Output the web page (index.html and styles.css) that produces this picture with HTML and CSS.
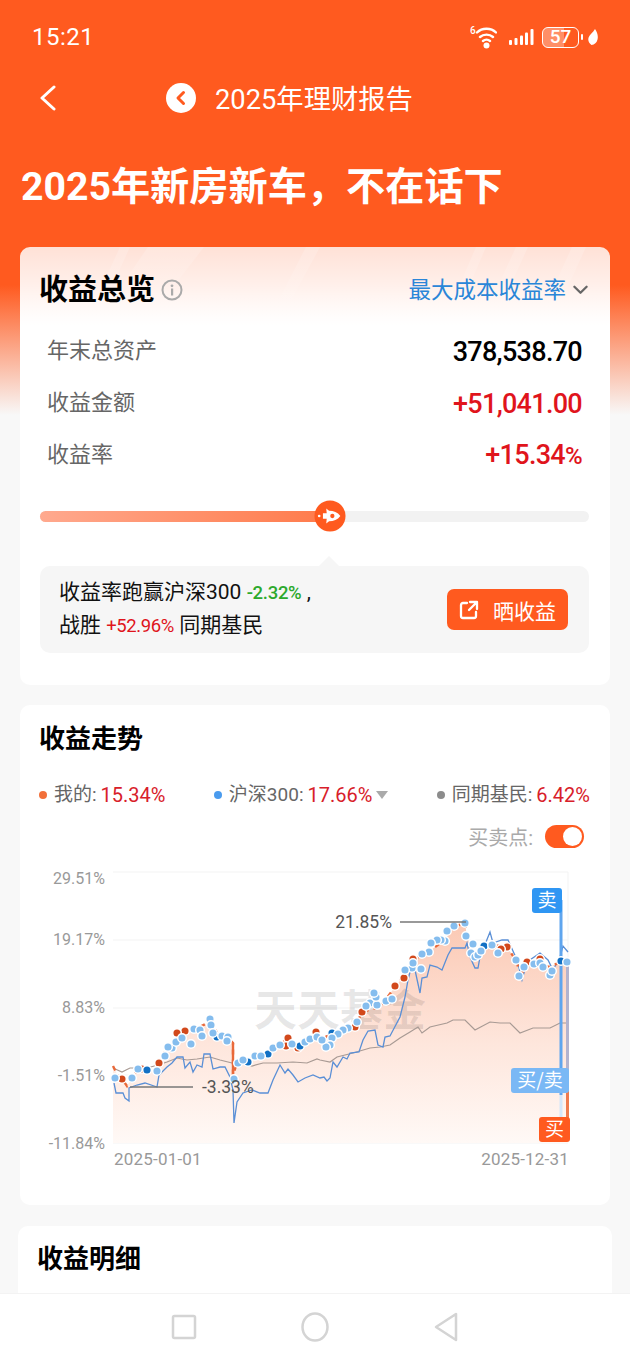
FILE: index.html
```html
<!DOCTYPE html>
<html lang="zh-CN">
<head>
<meta charset="utf-8">
<title>2025年理财报告</title>
<link rel="stylesheet" href="styles.css">
</head>
<body>
<div class="screen">
  <header class="status">
    <span class="time">15:21</span>
    <div class="status-icons">
      <svg class="wifi" viewBox="0 0 27 24" width="27" height="24"><text x="0" y="9" class="wifi-six">6</text><path d="M7 7.500C12 2.500 21 2.500 26 7.500M10 12c3.500-3.200 9.500-3.200 13 0M13 16c2-1.700 5-1.700 7 0" fill="none" stroke="#fff" stroke-width="2.400" stroke-linecap="round"/><circle cx="16.500" cy="20.500" r="3" fill="#fff"/></svg>
      <svg class="signal" viewBox="0 0 25 16" width="25" height="16"><g fill="#fff"><rect x="0" y="11" width="3" height="5" rx="1"/><rect x="5.500" y="9" width="3" height="7" rx="1"/><rect x="11" y="6.500" width="3" height="9.500" rx="1"/><rect x="16" y="3.500" width="3" height="12.500" rx="1"/><rect x="21.500" y="0" width="3" height="16" rx="1"/></g></svg>
      <span class="battery">57</span>
      <span class="battery-nub"></span>
      <svg class="leaf" viewBox="0 0 10 17" width="10" height="17"><path d="M7 0C9.500 3.500 10.300 7 9.500 10.500 8.800 13.800 6.500 15.500 3.500 16 .8 14 -.3 11.500 .6 8.500 1.500 5.500 5 3.500 7 0Z" fill="#fff"/></svg>
    </div>
  </header>
  <nav class="topnav">
    <svg class="back" viewBox="0 0 18 26" width="18" height="26"><path d="M15 2 3 13l12 11" fill="none" stroke="#fff" stroke-width="3" stroke-linecap="round" stroke-linejoin="round"/></svg>
    <svg class="back-round" viewBox="0 0 30 30" width="30" height="30"><circle cx="15" cy="15" r="15" fill="#fff"/><path d="M17.500 9.500 12 15l5.500 5.500" fill="none" stroke="#ff5a1f" stroke-width="3" stroke-linecap="round" stroke-linejoin="round"/></svg>
    <span class="nav-title">2025年理财报告</span>
  </nav>
  <h1 class="hero">2025年新房新车，不在话下</h1>

  <main class="content">
    <section class="card overview">
      <svg class="stripes" viewBox="0 0 590 70" width="590" height="70" aria-hidden="true">
        <defs><linearGradient id="st" x1="0" y1="0" x2="0" y2="1"><stop offset="0" stop-color="#fff" stop-opacity=".18"/><stop offset="1" stop-color="#fff" stop-opacity="0"/></linearGradient></defs>
        <path d="M100 0h10L78 70H68ZM128 0h56L130 70H80ZM286 0h14L262 70H250ZM456 0h10L436 70H426ZM496 0h12L476 70H464ZM552 0h14L534 70H520Z" fill="url(#st)"/>
      </svg>
      <div class="overview-head">
        <div class="head-left">
          <h2 class="h-big">收益总览</h2>
          <svg class="info" viewBox="0 0 22 22" width="22" height="22"><circle cx="11" cy="11" r="9.500" fill="none" stroke="#aaa" stroke-width="2"/><rect x="10" y="9.500" width="2.200" height="7" fill="#aaa"/><circle cx="11" cy="6.800" r="1.400" fill="#aaa"/></svg>
        </div>
        <div class="head-right">
          <span class="metric">最大成本收益率</span>
          <svg viewBox="0 0 16 10" width="15" height="10"><path d="M1.500 1.500 8 8l6.500-6.500" fill="none" stroke="#666" stroke-width="2.400" stroke-linecap="round" stroke-linejoin="round"/></svg>
        </div>
      </div>
      <div class="row"><span class="row-label">年末总资产</span><span class="row-value">378,538.70</span></div>
      <div class="row"><span class="row-label">收益金额</span><span class="row-value red">+51,041.00</span></div>
      <div class="row"><span class="row-label">收益率</span><span class="row-value red">+15.34<span class="pct">%</span></span></div>

      <div class="slider">
        <div class="slider-fill"></div>
        <svg class="thumb" viewBox="0 0 34 34" width="32" height="32"><circle cx="17" cy="17" r="16.500" fill="#ff5a1f"/><path d="M28 17c-3 4-7 5.500-12 5.500l-3 2.500 .5-5H9.500v-6h4l-.5-5 3 2.500c5 0 9 1.500 12 5.500Z" fill="#fff"/><circle cx="19.500" cy="17" r="2.300" fill="#ff5a1f"/><circle cx="5.500" cy="17" r="1.400" fill="#fff"/></svg>
      </div>

      <div class="compare">
        <span class="tail"></span>
        <p class="compare-text">收益率跑赢沪深300 <span class="green">-2.32%</span> ,<br>战胜 <span class="red2">+52.96%</span> 同期基民</p>
        <button class="share">
          <svg viewBox="0 0 20 20" width="20" height="20"><path d="M8 3H4a2 2 0 0 0-2 2v11a2 2 0 0 0 2 2h11a2 2 0 0 0 2-2v-4M11 2h7v7M18 2l-8 8" fill="none" stroke="#fff" stroke-width="2.300" stroke-linecap="round" stroke-linejoin="round"/></svg>
          <span>晒收益</span>
        </button>
      </div>
    </section>

    <section class="card trend">
      <h2 class="h-mid">收益走势</h2>
      <div class="legend">
        <span class="leg"><i class="dot dot-me"></i><span class="leg-name">我的:</span><span class="leg-val">15.34%</span></span>
        <span class="leg"><i class="dot dot-hs"></i><span class="leg-name">沪深300:</span><span class="leg-val">17.66%</span><i class="caret"></i></span>
        <span class="leg"><i class="dot dot-peer"></i><span class="leg-name">同期基民:</span><span class="leg-val">6.42%</span></span>
      </div>
      <div class="trade-toggle"><span>买卖点:</span><span class="toggle"><i class="knob"></i></span></div>

      <svg class="chart" viewBox="40 860 550 320" width="550" height="320">
        <defs>
          <linearGradient id="area" x1="0" y1="0" x2="0" y2="1"><stop offset="0" stop-color="#fbc9b4"/><stop offset=".55" stop-color="#fee6dc"/><stop offset="1" stop-color="#fff9f6"/></linearGradient>
        </defs>
        <g class="grid">
          <line x1="113" x2="568" y1="872" y2="872"/><line x1="113" x2="568" y1="940" y2="940"/><line x1="113" x2="568" y1="1008" y2="1008"/><line x1="113" x2="568" y1="1075" y2="1075"/><line x1="113" x2="568" y1="1143" y2="1143"/>
          <line x1="568" x2="568" y1="872" y2="960"/>
        </g>
        <g class="axis">
          <text x="105" y="884">29.51%</text><text x="105" y="945">19.17%</text><text x="105" y="1013">8.83%</text><text x="105" y="1081">-1.51%</text><text x="105" y="1149">-11.84%</text>
        </g>
        <text class="date" x="114" y="1165">2025-01-01</text>
        <text class="date date-end" x="569" y="1165">2025-12-31</text>
        <polygon class="area" points="113,1066 118,1076 122,1079 127,1086 132,1078 138,1069 147,1070 157,1071 159,1063 167,1047 185,1032 193,1030 210,1022 220,1037 230,1040 233,1043 233,1075 237,1063 257,1057 268,1055 288,1038 297,1048 317,1032 320,1040 333,1033 355,1027 362,1012 380,1007 395,987 403,977 413,960 428,952 445,940 453,927 465,923 467,937 475,957 485,947 492,945 507,947 517,962 520,977 527,963 550,967 560,962 568,962 568,1143 113,1143"/>
        <text class="watermark" x="340" y="1026">天天基金</text>
        <polyline class="peer" points="113,1068 122,1072 126,1070 130,1068 147,1068 158,1065 167,1062 177,1058 187,1060 197,1059 210,1057 220,1060 232,1063 243,1063 252,1066 263,1063 277,1063 293,1062 307,1063 317,1059 320,1060 330,1062 337,1057 353,1053 370,1048 380,1047 390,1045 400,1038 410,1032 418,1027 422,1033 430,1027 447,1023 453,1020 465,1020 475,1030 490,1022 500,1023 510,1023 520,1033 533,1028 550,1028 560,1023 568,1023"/>
        <polyline class="hs" points="114,1083 116,1093 123,1093 125,1098 129,1101 129,1088 137,1085 145,1083 157,1087 159,1075 167,1067 172,1063 177,1057 183,1057 185,1068 190,1062 193,1072 197,1065 202,1067 204,1054 210,1054 213,1069 220,1067 225,1067 230,1077 233,1090 234,1123 237,1102 243,1093 252,1090 260,1093 268,1093 273,1080 280,1065 285,1073 288,1069 293,1075 298,1082 305,1078 313,1075 320,1078 324,1077 327,1081 330,1078 333,1062 337,1067 343,1057 347,1059 350,1053 359,1052 363,1040 368,1031 375,1030 378,1045 383,1047 385,1037 390,1036 400,1017 405,997 408,980 410,972 415,970 420,993 422,978 427,977 430,965 437,967 442,970 448,955 452,948 465,948 467,943 470,957 475,968 478,968 480,957 490,932 493,943 502,940 508,940 517,960 522,980 527,962 540,953 548,960 553,970 560,957 563,946 568,952"/>
        <polyline class="me me-dash" points="113,1066 118,1076 122,1079 127,1086 132,1078 138,1069 147,1070 157,1071 159,1063 167,1047 185,1032 193,1030 210,1022 220,1037 230,1040 233,1043 233,1075 237,1063 257,1057 268,1055 288,1038 297,1048 317,1032 320,1040 333,1033 355,1027 362,1012 380,1007 395,987 403,977 413,960 428,952 445,940 453,927 465,923 467,937 475,957 485,947 492,945 507,947 517,962 520,977 527,963 550,967 560,962 568,962"/>
        <line class="me" x1="233" x2="233" y1="1043" y2="1075"/>
        <g class="vlines">
          <line class="v-blue" x1="561" x2="561" y1="900" y2="1095"/>
          <line class="v-blue-faint" x1="561" x2="561" y1="1095" y2="1130"/>
          <line class="v-mix" x1="567.500" x2="567.500" y1="960" y2="1075"/>
          <line class="v-orange" x1="567.500" x2="567.500" y1="1075" y2="1125"/>
        </g>
        <g class="mk mk-orange">
          <circle cx="122" cy="1079" r="4.300"/><circle cx="142" cy="1069" r="4.300"/><circle cx="159" cy="1063" r="4.300"/><circle cx="185" cy="1031" r="4.300"/><circle cx="288" cy="1038" r="4.300"/><circle cx="316" cy="1032" r="4.300"/><circle cx="286" cy="1046" r="4.300"/><circle cx="298" cy="1048" r="4.300"/><circle cx="177" cy="1033" r="4.300"/><circle cx="395" cy="986" r="4.300"/><circle cx="362" cy="1012" r="4.300"/><circle cx="355" cy="1027" r="4.300"/><circle cx="413" cy="959" r="4.300"/><circle cx="404" cy="978" r="4.300"/><circle cx="507" cy="947" r="4.300"/><circle cx="501" cy="949" r="4.300"/><circle cx="527" cy="962" r="4.300"/><circle cx="540" cy="959" r="4.300"/>
        </g>
        <g class="mk mk-dark">
          <circle cx="147" cy="1070" r="4.300"/><circle cx="217" cy="1037" r="4.300"/><circle cx="268" cy="1054" r="4.300"/><circle cx="300" cy="1046" r="4.300"/><circle cx="248" cy="1062" r="4.300"/><circle cx="332" cy="1033" r="4.300"/><circle cx="484" cy="946" r="4.300"/><circle cx="561" cy="961" r="4.300"/>
        </g>
        <g class="mk mk-light">
          <circle cx="115" cy="1078" r="4.300"/><circle cx="132" cy="1078" r="4.300"/><circle cx="157" cy="1071" r="4.300"/><circle cx="165" cy="1056" r="4.300"/><circle cx="172" cy="1048" r="4.300"/><circle cx="176" cy="1042" r="4.300"/><circle cx="182" cy="1038" r="4.300"/><circle cx="191" cy="1044" r="4.300"/><circle cx="194" cy="1029" r="4.300"/><circle cx="200" cy="1030" r="4.300"/><circle cx="202" cy="1036" r="4.300"/><circle cx="210" cy="1019" r="4.300"/><circle cx="211" cy="1025" r="4.300"/><circle cx="213" cy="1033" r="4.300"/><circle cx="222" cy="1036" r="4.300"/><circle cx="228" cy="1037" r="4.300"/><circle cx="227" cy="1041" r="4.300"/><circle cx="234" cy="1079" r="4.300"/><circle cx="238" cy="1063" r="4.300"/><circle cx="243" cy="1060" r="4.300"/><circle cx="255" cy="1056" r="4.300"/><circle cx="261" cy="1056" r="4.300"/><circle cx="273" cy="1048" r="4.300"/><circle cx="280" cy="1045" r="4.300"/><circle cx="292" cy="1044" r="4.300"/><circle cx="305" cy="1042" r="4.300"/><circle cx="310" cy="1039" r="4.300"/><circle cx="317" cy="1037" r="4.300"/><circle cx="168" cy="1047" r="4.300"/><circle cx="138" cy="1069" r="4.300"/>
          <circle cx="357" cy="1022" r="4.300"/><circle cx="348" cy="1028" r="4.300"/><circle cx="343" cy="1030" r="4.300"/><circle cx="338" cy="1034" r="4.300"/><circle cx="332" cy="1038" r="4.300"/><circle cx="330" cy="1045" r="4.300"/><circle cx="326" cy="1047" r="4.300"/><circle cx="322" cy="1040" r="4.300"/><circle cx="370" cy="1003" r="4.300"/><circle cx="366" cy="1006" r="4.300"/><circle cx="377" cy="1005" r="4.300"/><circle cx="386" cy="1001" r="4.300"/><circle cx="392" cy="999" r="4.300"/><circle cx="376" cy="997" r="4.300"/><circle cx="374" cy="993" r="4.300"/>
          <circle cx="454" cy="926" r="4.300"/><circle cx="465" cy="923" r="4.300"/><circle cx="466" cy="936" r="4.300"/><circle cx="473" cy="944" r="4.300"/><circle cx="471" cy="953" r="4.300"/><circle cx="475" cy="957" r="4.300"/><circle cx="478" cy="955" r="4.300"/><circle cx="481" cy="951" r="4.300"/><circle cx="492" cy="945" r="4.300"/><circle cx="498" cy="953" r="4.300"/><circle cx="516" cy="960" r="4.300"/><circle cx="519" cy="976" r="4.300"/><circle cx="524" cy="967" r="4.300"/><circle cx="534" cy="964" r="4.300"/><circle cx="540" cy="963" r="4.300"/><circle cx="543" cy="967" r="4.300"/><circle cx="550" cy="975" r="4.300"/><circle cx="552" cy="971" r="4.300"/><circle cx="567" cy="962" r="4.300"/><circle cx="445" cy="941" r="4.300"/><circle cx="447" cy="931" r="4.300"/><circle cx="441" cy="940" r="4.300"/><circle cx="437" cy="940" r="4.300"/><circle cx="431" cy="943" r="4.300"/><circle cx="429" cy="952" r="4.300"/><circle cx="422" cy="954" r="4.300"/><circle cx="421" cy="969" r="4.300"/><circle cx="412" cy="968" r="4.300"/><circle cx="413" cy="963" r="4.300"/><circle cx="405" cy="970" r="4.300"/>
        </g>
        <line class="leader" x1="400" x2="466" y1="922" y2="922"/>
        <text class="note" x="392" y="928">21.85%</text>
        <line class="leader" x1="130" x2="193" y1="1087" y2="1087"/>
        <text class="note note-start" x="202" y="1093">-3.33%</text>
        <rect class="b-sell" x="532" y="888" width="30" height="25" rx="3"/>
        <text class="b-text" x="547" y="907">卖</text>
        <rect class="b-both" x="511" y="1068" width="58" height="25" rx="3"/>
        <text class="b-text" x="540" y="1087">买/卖</text>
        <rect class="b-buy" x="539" y="1117" width="31" height="25" rx="3"/>
        <text class="b-text" x="554.500" y="1136">买</text>
      </svg>
    </section>

    <section class="card detail">
      <h2 class="h-mid">收益明细</h2>
    </section>
  </main>

  <footer class="sysnav">
    <span class="sys-cell"><svg viewBox="0 0 26 26" width="26" height="26"><rect x="2" y="2" width="22" height="22" rx="1.500"/></svg></span>
    <span class="sys-cell"><svg viewBox="0 0 28 30" width="28" height="30"><ellipse cx="14" cy="15" rx="12.500" ry="13.500"/></svg></span>
    <span class="sys-cell"><svg viewBox="0 0 26 30" width="26" height="30"><path d="M23 2v26L3 15Z"/></svg></span>
  </footer>
</div>
</body>
</html>
```

FILE: styles.css
```css
* { box-sizing: border-box; margin: 0; padding: 0; }
html, body { width: 630px; height: 1360px; overflow: hidden; }
body { font-family: Roboto, "Noto Sans CJK SC", sans-serif; color: #000; }

.screen {
  position: relative;
  width: 630px;
  height: 1360px;
  overflow: hidden;
  background: linear-gradient(#ff5a1f 0, #ff5a1f 285px, #f8f8f8 415px);
}

/* status bar */
.status { height: 74px; display: flex; align-items: center; justify-content: space-between; padding: 0 32px; color: #fff; }
.time { font-size: 24px; letter-spacing: .5px; }
.status-icons { display: flex; align-items: center; }
.wifi-six { font-size: 10px; font-weight: 500; fill: #fff; }
.wifi { margin-right: 12px; margin-left: 2px; }
.signal { margin-right: 8px; }
.battery {
  width: 37px; height: 21px; border: 1.500px solid #fff; border-radius: 6px;
  font-size: 19px; font-weight: 500; line-height: 18px; text-align: center; color: #fff;
  background: linear-gradient(90deg, rgba(255,255,255,.32) 60%, transparent 60%);
}
.battery-nub { width: 2px; height: 6px; background: #fff; margin: 0 5px 0 2px; border-radius: 1px; }

/* nav */
.topnav { height: 48px; display: flex; align-items: center; padding-left: 39px; color: #fff; }
.back { margin-right: 109px; }
.back-round { margin-right: 19px; }
.nav-title { font-size: 27.300px; padding-bottom: 3px; }
.hero { margin-top: 40px; padding-left: 21px; font-size: 39.200px; line-height: 50px; font-weight: 700; color: #fff; }

.content { padding: 35px 20px 0; display: flex; flex-direction: column; }
.card { border-radius: 10px; background: #fff; }

/* overview */
.overview {
  position: relative;
  height: 438px;
  background: linear-gradient(rgba(255,255,255,.82) 0, #fff 78px, #fff 100%);
}
.stripes { position: absolute; left: 0; top: 0; }
.overview-head { position: relative; display: flex; justify-content: space-between; align-items: center; height: 42px; margin: 22px 22px 13px 19px; }
.head-left, .head-right { display: flex; align-items: center; }
.h-big { font-size: 29px; font-weight: 700; line-height: 42px; }
.info { margin-left: 6px; }
.metric { font-size: 22.500px; color: #2a86d8; margin-right: 7px; padding-bottom: 5px; }
.row { height: 52px; display: flex; align-items: center; justify-content: space-between; padding: 0 28px 0 27px; }
.row-label { font-size: 22px; color: #666; padding-bottom: 4px; }
.row-value { font-size: 27px; font-weight: 500; line-height: 52px; letter-spacing: -.7px; padding-top: 3px; }
.red { color: #e0141c; }
.pct { font-size: 24px; }

.slider { position: relative; height: 11px; margin: 31px 21px 0 20px; background: #f2f2f2; border-radius: 6px; }
.slider-fill { height: 11px; width: 292px; border-radius: 6px 0 0 6px; background: linear-gradient(90deg, #ffa98e, #ff7a4a); }
.thumb { position: absolute; left: 274px; top: -11px; }

.compare { position: relative; display: flex; align-items: center; justify-content: space-between; height: 87px; margin: 44px 21px 0 20px; padding: 0 21px 0 19px; background: #f6f6f6; border-radius: 10px; }
.tail { position: absolute; left: 279px; top: -10px; border: 10px solid transparent; border-top: 0; border-bottom-color: #f6f6f6; }
.compare-text { font-size: 21px; line-height: 32px; color: #111; margin-top: -2px; }
.green { font-size: 18.500px; color: #2ca92c; font-weight: 500; letter-spacing: -.3px; }
.red2 { font-size: 18.500px; color: #e0141c; letter-spacing: -.4px; }
.share { display: flex; align-items: center; gap: 14px; justify-content: center; width: 121px; height: 41px; border: 0; border-radius: 7px; background: #ff5a1f; color: #fff; font: 400 21px Roboto, "Noto Sans CJK SC", sans-serif; }

/* trend */
.trend { margin-top: 20px; height: 500px; padding: 20px 20px 0; }
.h-mid { font-size: 26px; font-weight: 700; line-height: 28px; margin-left: -1px; }
.legend { display: flex; justify-content: space-between; height: 24px; margin-top: 30px; font-size: 19px; line-height: 24px; }
.leg { display: inline-flex; align-items: center; }
.dot { width: 8px; height: 8px; border-radius: 50%; margin: 0 7px 0 -1px; }
.dot-me { background: #f2703a; }
.dot-hs { background: #4a9bee; }
.dot-peer { background: #8c8c8c; }
.leg-name { color: #666; margin-right: 4px; }
.leg-val { color: #d8202a; font-size: 20px; }
.caret { margin-left: 4px; border: 6px solid transparent; border-bottom: 0; border-top: 8px solid #aaa; }
.trade-toggle { display: flex; align-items: center; justify-content: flex-end; height: 23px; margin-top: 18px; padding-right: 6px; font-size: 20px; color: #aaa; }
.toggle { position: relative; width: 39px; height: 23px; margin-left: 12px; border-radius: 12px; background: #ff5a1f; }
.knob { position: absolute; right: 2px; top: 2px; width: 19px; height: 19px; border-radius: 50%; background: #fff; }
.chart { display: block; margin-top: 12px; }

.grid line { stroke: #f3f3f3; stroke-width: 1; }
.axis text { font-size: 16px; fill: #999; text-anchor: end; }
.date { font-size: 17px; fill: #999; letter-spacing: .2px; }
.date-end { text-anchor: end; }
.area { fill: url(#area); }
.watermark { font-family: "Noto Sans CJK SC", sans-serif; font-size: 43px; font-weight: 700; fill: #000; fill-opacity: .09; text-anchor: middle; }
.peer { fill: none; stroke: #a89a94; stroke-width: 1.200; }
.hs { fill: none; stroke: #5a8fd6; stroke-width: 1.300; }
.me { fill: none; stroke: #e9693a; stroke-width: 2.400; }
.me-dash { stroke-dasharray: 5 5; }
.v-blue { stroke: #5fa5ee; stroke-width: 3; }
.v-blue-faint { stroke: #d5e6f8; stroke-width: 3; }
.v-mix { stroke: #b2b3cf; stroke-width: 3; }
.v-orange { stroke: #ef7a4c; stroke-width: 3; }
.mk circle { stroke: #fff; stroke-width: 1.500; }
.mk-light circle { fill: #85bdee; }
.mk-orange circle { fill: #d2491c; }
.mk-dark circle { fill: #1270c4; }
.leader { stroke: #777; stroke-width: 1.500; }
.note { font-size: 17.500px; fill: #555; text-anchor: end; }
.note-start { text-anchor: start; }
.b-sell { fill: #2f96f3; }
.b-both { fill: #7ab8f5; }
.b-buy { fill: #ff5a1f; }
.b-text { font-family: "Noto Sans CJK SC", sans-serif; font-size: 19px; fill: #fff; text-anchor: middle; }

/* detail */
.detail { margin: 21px -2px 0; height: 200px; padding: 19px 20px 0; }

/* system nav */
.sysnav { position: absolute; left: 0; right: 0; bottom: 0; height: 67px; background: #fff; border-top: 1px solid #f3f3f3; display: flex; justify-content: center; align-items: center; }
.sys-cell { width: 131px; display: flex; justify-content: center; }
.sys-cell svg { display: block; fill: none; stroke: #d4d4d4; stroke-width: 2.500; stroke-linejoin: round; }
```
